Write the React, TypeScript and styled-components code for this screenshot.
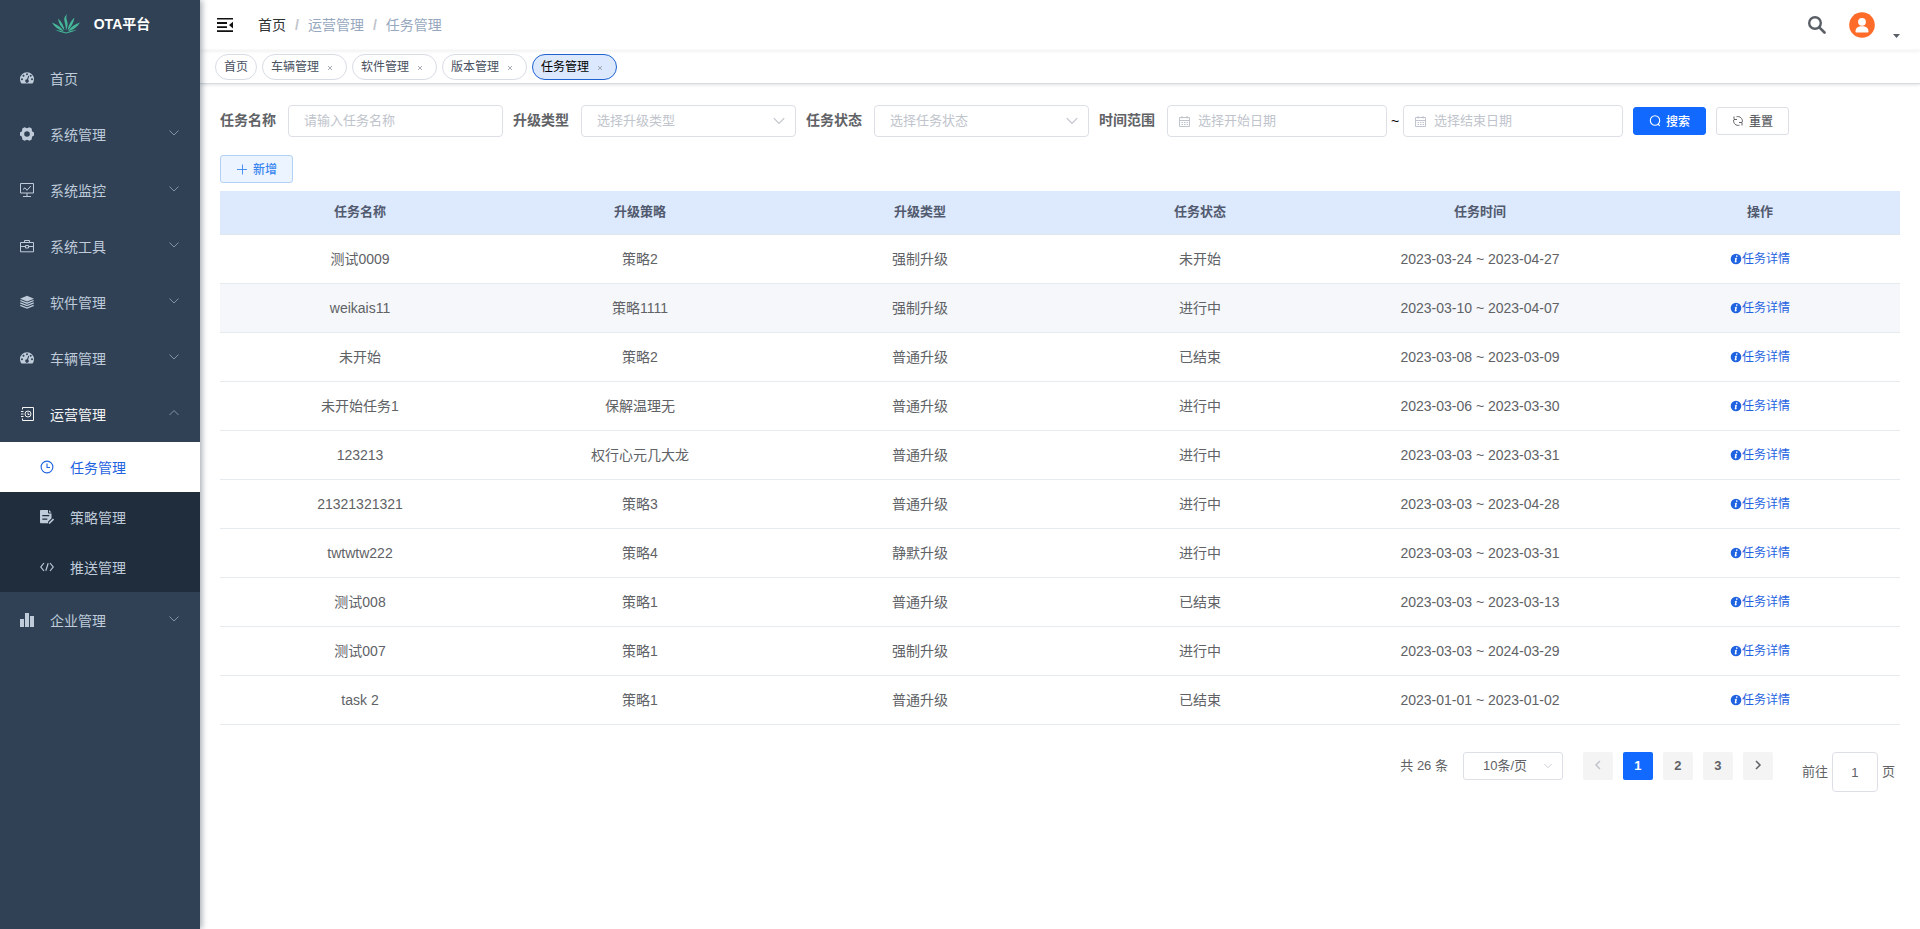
import React from "react";
import styled, { createGlobalStyle } from "styled-components";

const GlobalStyle = createGlobalStyle`
  *, *::before, *::after { box-sizing: border-box; }
  body {
    margin: 0;
    background: #fff;
    color: #606266;
    font: 14px/20px "Liberation Sans", Arial, "Noto Sans CJK SC", sans-serif;
  }
  button, input, select { font-family: inherit; margin: 0; }
  a { color: inherit; text-decoration: none; }
  svg { display: block; flex: none; }
`;

const Layout = styled.div`
  display: flex;
  min-height: 100vh;
`;

const Sidebar = styled.aside`
  flex: 0 0 200px;
  z-index: 2;
  background: #304156;
  box-shadow: 2px 0 6px rgba(0, 21, 41, 0.35);
`;

const Brand = styled.a`
  display: flex;
  align-items: center;
  justify-content: center;
  gap: 14px;
  height: 50px;
  padding: 0 0 2px 2px;
  color: #fff;
  font-size: 14px;
  font-weight: 700;
`;

const Menu = styled.ul`
  margin: 0;
  padding: 0;
  list-style: none;
`;

const SubMenu = styled(Menu)`
  background: #1f2d3d;
`;

const MenuLink = styled.a<{ $sub?: boolean; $active?: boolean; $open?: boolean }>`
  display: flex;
  align-items: center;
  height: ${(p) => (p.$sub ? 50 : 56)}px;
  padding: 0 20px 0 ${(p) => (p.$sub ? 40 : 20)}px;
  gap: 16px;
  background: ${(p) => (p.$active ? "#fff" : "transparent")};
  color: ${(p) => (p.$active ? "#1f63e0" : p.$open ? "#f4f4f5" : "#bfcbd9")};
`;

const MenuText = styled.span`
  flex: 1;
  padding-top: 2px;
`;

const Main = styled.main`
  flex: 1;
  min-width: 0;
`;

const Navbar = styled.header`
  display: flex;
  align-items: center;
  height: 50px;
  padding: 0 20px 0 17px;
  box-shadow: 0 1px 4px rgba(0, 21, 41, 0.08);
`;

const IconButton = styled.button`
  display: flex;
  padding: 0;
  border: 0;
  background: none;
  color: #5a5e66;
  cursor: pointer;
`;

const Breadcrumb = styled.nav`
  display: flex;
  flex: 1;
  margin-left: 25px;
  color: #97a8be;
`;

const Crumb = styled.a`
  &:first-child { color: #303133; }
  & + &::before {
    content: "/";
    margin: 0 9px;
    color: #c0c4cc;
    font-weight: 700;
  }
`;

const UserMenu = styled(IconButton)`
  align-items: flex-end;
  gap: 18px;
  margin-left: 23px;
`;

const Tags = styled.nav`
  display: flex;
  gap: 5px;
  height: 34px;
  padding: 4px 15px;
  border-bottom: 1px solid #d8dce5;
  box-shadow: 0 1px 3px rgba(0, 0, 0, 0.12);
`;

const Tag = styled.a<{ $active?: boolean }>`
  display: flex;
  align-items: center;
  gap: 8px;
  height: 26px;
  padding: 0 8px;
  border: 1px solid ${(p) => (p.$active ? "#1f63d0" : "#d8dce5")};
  border-radius: 13px;
  background: ${(p) => (p.$active ? "#dbe8fd" : "#fff")};
  color: ${(p) => (p.$active ? "#000" : "#495060")};
  font-size: 12px;
`;

const TagClose = styled.span`
  display: flex;
  padding: 2px 5px 0 0;
  color: #8f949e;
`;

const Content = styled.div`
  padding: 21px 20px 20px;
`;

const Filters = styled.form`
  display: flex;
  flex-wrap: wrap;
  align-items: center;
  gap: 10px;
`;

const Field = styled.div`
  display: flex;
  align-items: center;
`;

const Label = styled.label`
  margin-right: 12px;
  padding-bottom: 2px;
  font-weight: 700;
`;

const Control = styled.span<{ $width: number }>`
  position: relative;
  display: flex;
  align-items: center;
  width: ${(p) => p.$width}px;
`;

const Prefix = styled.span`
  position: absolute;
  left: 11px;
  color: #c0c4cc;
  pointer-events: none;
`;

const Suffix = styled.span`
  position: absolute;
  right: 10px;
  color: #c0c4cc;
  pointer-events: none;
`;

const TextInput = styled.input<{ $prefixed?: boolean }>`
  width: 100%;
  height: 32px;
  padding: 0 15px 2px ${(p) => (p.$prefixed ? 30 : 15)}px;
  border: 1px solid #dcdfe6;
  border-radius: 4px;
  background: #fff;
  color: #606266;
  font-size: 13px;
  &::placeholder { color: #c0c4cc; }
`;

const Select = styled.select<{ $small?: boolean }>`
  appearance: none;
  width: 100%;
  height: ${(p) => (p.$small ? 28 : 32)}px;
  padding: 0 ${(p) => (p.$small ? 19 : 30)}px 2px ${(p) => (p.$small ? 19 : 15)}px;
  border: 1px solid #dcdfe6;
  border-radius: ${(p) => (p.$small ? 3 : 4)}px;
  background: #fff;
  color: ${(p) => (p.$small ? "#606266" : "#c0c4cc")};
  font-size: 13px;
`;

const Tilde = styled.span`
  width: 16px;
  color: #000;
  text-align: center;
`;

const Button = styled.button<{ $kind: "primary" | "default" | "plain" }>`
  display: inline-flex;
  align-items: center;
  gap: 5px;
  height: 28px;
  padding: 0 15px 1px;
  border: 1px solid ${(p) => ({ primary: "#1269ff", default: "#dcdfe6", plain: "#b3d0f7" })[p.$kind]};
  border-radius: 3px;
  background: ${(p) => ({ primary: "#1269ff", default: "#fff", plain: "#ecf4ff" })[p.$kind]};
  color: ${(p) => ({ primary: "#fff", default: "#606266", plain: "#3a86ef" })[p.$kind]};
  font-size: 12px;
  font-weight: 500;
  cursor: pointer;
`;

const Toolbar = styled.div`
  display: flex;
  margin: 18px 0 8px;
`;

const Table = styled.table`
  width: 100%;
  table-layout: fixed;
  border-collapse: separate;
  border-spacing: 0;
  text-align: center;
`;

const Th = styled.th`
  height: 44px;
  padding: 0 10px 2px;
  border-bottom: 1px solid #dfe6ec;
  background: #dde9fd;
  color: #515a6e;
  font-size: 13px;
`;

const Row = styled.tr<{ $hover?: boolean }>`
  background: ${(p) => (p.$hover ? "#f5f7fa" : "#fff")};
`;

const Td = styled.td`
  height: 49px;
  padding: 0 10px;
  border-bottom: 1px solid #e6ebf0;
`;

const DetailLink = styled.a`
  display: inline-flex;
  align-items: center;
  color: #1f63e0;
  font-size: 12px;
`;

const Pagination = styled.nav`
  display: flex;
  align-items: flex-start;
  justify-content: flex-end;
  margin: 27px 5px 0 0;
  font-size: 13px;
  line-height: 28px;
`;

const Total = styled.span`
  margin-right: 15px;
`;

const Pages = styled.div`
  display: flex;
  gap: 10px;
  margin: 0 29px 0 20px;
`;

const PageButton = styled.button<{ $current?: boolean }>`
  display: flex;
  align-items: center;
  justify-content: center;
  width: 30px;
  height: 28px;
  padding: 0 0 2px;
  border: 0;
  border-radius: 2px;
  background: ${(p) => (p.$current ? "#1269ff" : "#f4f4f5")};
  color: ${(p) => (p.$current ? "#fff" : "#606266")};
  font-size: 13px;
  font-weight: 700;
  &:disabled { color: #c0c4cc; }
`;

const Jumper = styled.label`
  display: flex;
  align-items: center;
  gap: 4px;
`;

const JumpInput = styled.input`
  width: 46px;
  height: 40px;
  padding: 0;
  border: 1px solid #dcdfe6;
  border-radius: 4px;
  color: #606266;
  font-size: 13px;
  text-align: center;
`;

const chevronPaths = {
  down: "M1.5 3.5 6 8l4.5-4.5",
  up: "M1.5 8 6 3.5 10.5 8",
  left: "M8 2 4 6l4 4",
  right: "M4 2l4 4-4 4",
};

const Chevron = ({ dir = "down", size = 12, width = 1 }: { dir?: keyof typeof chevronPaths; size?: number; width?: number }) => (
  <svg width={size} height={size} viewBox="0 0 12 12" fill="none" stroke="currentColor" strokeWidth={width}>
    <path d={chevronPaths[dir]} />
  </svg>
);

const CloseIcon = () => (
  <svg width="6" height="6" viewBox="0 0 6 6" stroke="currentColor" strokeWidth="0.8">
    <path d="M1 1l4 4M5 1 1 5" />
  </svg>
);

const CalendarIcon = () => (
  <svg width="13" height="13" viewBox="0 0 13 13" fill="none" stroke="currentColor">
    <path d="M1.500 2.500h10v9h-10zM1.500 5.500h10M4 1v2.500M9 1v2.500" />
    <path d="M3.500 7.500H5M6 7.500h1.500M8.500 7.500H10M3.500 9.500H5M6 9.500h1.500M8.500 9.500H10" />
  </svg>
);

const LogoIcon = () => (
  <svg width="28" height="20" viewBox="0 0 28 20" fill="#45b798">
    <path d="M15.500 0c-3.500 2.500-3.600 5-2.800 8 .6 2.500 1 5 1.300 8.300 1.700-3.300 2.200-6.300 1-9.500C14 4.300 14 2 15.500 0z" />
    <path d="M6 4.500c.5 4.500 3 8.500 6.500 12C12 12 9.500 7.500 6 4.500z" />
    <path d="M22.500 3.500c-3.800 3.500-6.200 8-7 13 3.500-3 6-7.500 7-13z" />
    <path d="M0 8.500c2.200 4 6.500 7.500 12 9C9 13.500 5.500 10.500 0 8.500z" />
    <path d="M28 8.500c-5.500 1.500-9.500 5-12 9 5.500-1.500 9.500-5 12-9z" />
    <path d="M3 15.500c3.500 2.800 7.500 2.500 11 4 3.500-1.500 7.500-1.200 11-4-3 .8-8 1.800-11 3-3-1.200-8-2.200-11-3z" />
  </svg>
);

const FoldIcon = () => (
  <svg width="16" height="14" viewBox="0 0 16 14" fill="#111">
    <path d="M0 0h16v1.500H0zM0 4h10v2H0zM0 8.300h10v1.700H0zM0 12.300h16V14H0zM16 3.800v6.600L12 7z" />
  </svg>
);

const SearchBoldIcon = () => (
  <svg width="18" height="18" viewBox="0 0 18 18" fill="none" stroke="currentColor">
    <circle cx="7" cy="7" r="5.800" strokeWidth="2.400" />
    <path d="M11.300 11.300 16.500 16.500" strokeWidth="2.600" strokeLinecap="round" />
  </svg>
);

const AvatarIcon = () => (
  <svg width="26" height="26" viewBox="0 0 26 26">
    <circle cx="13" cy="13" r="12.800" fill="#ff6b28" />
    <circle cx="13" cy="9.800" r="3.900" fill="#fff" />
    <path d="M6.500 19.500c0-3.500 2.500-5.300 6.500-5.300s6.500 1.800 6.500 5.300c0 .7-.4 1-1 1h-11c-.6 0-1-.3-1-1z" fill="#fff" />
  </svg>
);

const CaretIcon = () => (
  <svg width="7" height="4" viewBox="0 0 7 4" fill="currentColor">
    <path d="M0 0h7L3.500 4z" />
  </svg>
);

const SearchIcon = () => (
  <svg width="12" height="12" viewBox="0 0 12 12" fill="none" stroke="currentColor" strokeWidth="1.100">
    <circle cx="6" cy="5.500" r="4.700" />
    <path d="M9 9l1.800 1.800" />
  </svg>
);

const RefreshIcon = () => (
  <svg width="12" height="12" viewBox="0 0 12 12" fill="none" stroke="currentColor">
    <path d="M4.500 1.800A4.500 4.500 0 0 1 10.300 7M7.500 10.200A4.500 4.500 0 0 1 1.700 5M2 1.500v3h3M10 10.500v-3H7" />
  </svg>
);

const PlusIcon = () => (
  <svg width="12" height="12" viewBox="0 0 12 12" stroke="currentColor">
    <path d="M1 6.500h10M6.500 1.500v10" strokeWidth="0.900" />
  </svg>
);

const InfoIcon = () => (
  <svg width="12" height="12" viewBox="0 0 12 12">
    <circle cx="6" cy="6" r="5.300" fill="#1f63e0" />
    <path d="M6.800 2.300a.8.8 0 1 1-.1 1.600.8.8 0 0 1 .1-1.600zM4.800 5l2.200-.3-.8 3.800.8-.3-.2.700-1.500.7c-.5 0-.7-.3-.6-.8L5.300 5.600 4.800 5.500z" fill="#fff" />
  </svg>
);

const menuIcons: Record<string, React.ReactNode> = {
  dashboard: (
    <path
      fill="currentColor"
      fillRule="evenodd"
      d="M7 1.200a7 7 0 0 0-7 7c0 1.400.4 2.700 1 3.800.2.300.4.500.8.500h10.400c.4 0 .6-.2.800-.5.600-1.100 1-2.400 1-3.800a7 7 0 0 0-7-7zM7 2.200a1 1 0 1 1 0 2 1 1 0 0 1 0-2zM3.500 3.700a1 1 0 1 1 0 2 1 1 0 0 1 0-2zM10.700 3.700a1 1 0 1 1 0 2 1 1 0 0 1 0-2zM2 7.200a1 1 0 1 1 0 2 1 1 0 0 1 0-2zM12 7.200a1 1 0 1 1 0 2 1 1 0 0 1 0-2zM8.300 4.700l.9.300-1.100 3.700A1.700 1.700 0 1 1 7 8.300z"
    />
  ),
  gear: (
    <path
      fill="currentColor"
      fillRule="evenodd"
      d="M4.500.3 7 1.300 9.500.3l2.200 1.300.3 2.600 2 1.300v3l-2 1.300-.3 2.600-2.200 1.300-2.500-1-2.500 1-2.200-1.300L2 9.800 0 8.500v-3l2-1.300.3-2.600zM7 4.200a2.800 2.800 0 1 0 0 5.600 2.800 2.800 0 0 0 0-5.600z"
    />
  ),
  monitor: <path fill="none" stroke="currentColor" d="M.5.500h13v9.500H.5zM7 10v3.500M3 13.500h8M3 6.500l2-1.700 2 2.500 3.800-4.300" />,
  tool: <path fill="none" stroke="currentColor" d="M.5 3.500h13v9.300H.5zM4.500 3.500v-2h5v2M.5 7.500h5M8.500 7.500h5M5.500 6.500h3v2.500h-3z" />,
  stack: (
    <g fill="none" stroke="currentColor">
      <path fill="currentColor" stroke="none" d="M7 .8l7 2.900-7 2.900-7-2.900z" />
      <path strokeWidth="1.300" d="M.3 5.500 7 8.200l6.700-2.700M.3 7.900 7 10.600l6.700-2.700M.3 10.300 7 13l6.700-2.700" />
    </g>
  ),
  log: (
    <g fill="none" stroke="currentColor">
      <path d="M2.500 2.500v-2h11v13h-11v-2M1 4.500h2.500M1 7h2.500M1 9.500h2.500" />
      <circle cx="8" cy="7" r="3" />
      <path d="M8 5.500V7.500h1.500" />
    </g>
  ),
  clock: (
    <g fill="none" stroke="currentColor" strokeWidth="1.100">
      <circle cx="7" cy="7" r="5.900" />
      <path d="M7 3.500v4h3" />
    </g>
  ),
  edit: (
    <>
      <path fill="currentColor" fillRule="evenodd" d="M1.200 0H8v2.500c0 .6.400 1 1 1h2.500v4.700L8 11.700v1.600H1.200C.4 13.300 0 12.800 0 12V1.200C0 .4.4 0 1.200 0zM2.300 5v1.200h7V5zM2.300 8.500v1.200h5V8.500z" />
      <path fill="currentColor" d="M9 0l2.500 2.500H9z" />
      <path stroke="currentColor" strokeWidth="1.600" d="M9 13.500 13.500 9" />
    </>
  ),
  code: <path fill="none" stroke="currentColor" strokeWidth="1.200" d="M4 3 .8 7 4 11M10 3l3.200 4L10 11M8.200 3.200 5.800 10.800" />,
  chart: <path fill="currentColor" d="M0 6h4v8H0zM5 0h4v14H5zM10 3h4v11h-4z" />,
};

const MenuIcon = ({ name }: { name: string }) => (
  <svg width="14" height="14" viewBox="0 0 14 14">
    {menuIcons[name]}
  </svg>
);

const MenuArrow = styled.span`
  margin: 0 0 3px;
  color: #8592a2;
`;

type Item = { text: string; icon: string; leaf?: boolean; children?: Item[] };

const menu: Item[] = [
  { text: "首页", icon: "dashboard", leaf: true },
  { text: "系统管理", icon: "gear" },
  { text: "系统监控", icon: "monitor" },
  { text: "系统工具", icon: "tool" },
  { text: "软件管理", icon: "stack" },
  { text: "车辆管理", icon: "dashboard" },
  {
    text: "运营管理",
    icon: "log",
    children: [
      { text: "任务管理", icon: "clock" },
      { text: "策略管理", icon: "edit" },
      { text: "推送管理", icon: "code" },
    ],
  },
  { text: "企业管理", icon: "chart" },
];

const tags = ["首页", "车辆管理", "软件管理", "版本管理", "任务管理"];
const columns = ["任务名称", "升级策略", "升级类型", "任务状态", "任务时间", "操作"];
const rows = [
  ["测试0009", "策略2", "强制升级", "未开始", "2023-03-24 ~ 2023-04-27"],
  ["weikais11", "策略1111", "强制升级", "进行中", "2023-03-10 ~ 2023-04-07"],
  ["未开始", "策略2", "普通升级", "已结束", "2023-03-08 ~ 2023-03-09"],
  ["未开始任务1", "保解温理无", "普通升级", "进行中", "2023-03-06 ~ 2023-03-30"],
  ["123213", "权行心元几大龙", "普通升级", "进行中", "2023-03-03 ~ 2023-03-31"],
  ["21321321321", "策略3", "普通升级", "进行中", "2023-03-03 ~ 2023-04-28"],
  ["twtwtw222", "策略4", "静默升级", "进行中", "2023-03-03 ~ 2023-03-31"],
  ["测试008", "策略1", "普通升级", "已结束", "2023-03-03 ~ 2023-03-13"],
  ["测试007", "策略1", "强制升级", "进行中", "2023-03-03 ~ 2024-03-29"],
  ["task 2", "策略1", "普通升级", "已结束", "2023-01-01 ~ 2023-01-02"],
];

const SelectField = ({ id, label, placeholder }: { id: string; label: string; placeholder: string }) => (
  <Field>
    <Label htmlFor={id}>{label}</Label>
    <Control $width={215}>
      <Select id={id}>
        <option>{placeholder}</option>
      </Select>
      <Suffix><Chevron size={14} /></Suffix>
    </Control>
  </Field>
);

export default function App() {
  return (
    <Layout>
      <GlobalStyle />
      <Sidebar>
        <Brand href="#">
          <LogoIcon />
          OTA平台
        </Brand>
        <Menu>
          {menu.map((item) => (
            <li key={item.text}>
              <MenuLink href="#" $open={!!item.children}>
                <MenuIcon name={item.icon} />
                <MenuText>{item.text}</MenuText>
                {!item.leaf && (
                  <MenuArrow>
                    <Chevron dir={item.children ? "up" : "down"} />
                  </MenuArrow>
                )}
              </MenuLink>
              {item.children && (
                <SubMenu>
                  {item.children.map((child, i) => (
                    <li key={child.text}>
                      <MenuLink href="#" $sub $active={i === 0}>
                        <MenuIcon name={child.icon} />
                        <MenuText>{child.text}</MenuText>
                      </MenuLink>
                    </li>
                  ))}
                </SubMenu>
              )}
            </li>
          ))}
        </Menu>
      </Sidebar>
      <Main>
        <Navbar>
          <IconButton aria-label="fold"><FoldIcon /></IconButton>
          <Breadcrumb>
            <Crumb href="#">首页</Crumb>
            <Crumb href="#">运营管理</Crumb>
            <Crumb href="#">任务管理</Crumb>
          </Breadcrumb>
          <IconButton aria-label="search"><SearchBoldIcon /></IconButton>
          <UserMenu aria-label="user">
            <AvatarIcon />
            <CaretIcon />
          </UserMenu>
        </Navbar>
        <Tags>
          {tags.map((tag, i) => (
            <Tag key={tag} href="#" $active={i === tags.length - 1}>
              {tag}
              {i > 0 && <TagClose><CloseIcon /></TagClose>}
            </Tag>
          ))}
        </Tags>
        <Content>
          <Filters>
            <Field>
              <Label htmlFor="name">任务名称</Label>
              <Control $width={215}>
                <TextInput id="name" placeholder="请输入任务名称" />
              </Control>
            </Field>
            <SelectField id="type" label="升级类型" placeholder="选择升级类型" />
            <SelectField id="status" label="任务状态" placeholder="选择任务状态" />
            <Field>
              <Label htmlFor="start">时间范围</Label>
              <Control $width={220}>
                <Prefix><CalendarIcon /></Prefix>
                <TextInput id="start" $prefixed placeholder="选择开始日期" />
              </Control>
              <Tilde>~</Tilde>
              <Control $width={220}>
                <Prefix><CalendarIcon /></Prefix>
                <TextInput aria-label="结束日期" $prefixed placeholder="选择结束日期" />
              </Control>
            </Field>
            <Button type="button" $kind="primary"><SearchIcon />搜索</Button>
            <Button type="button" $kind="default"><RefreshIcon />重置</Button>
          </Filters>
          <Toolbar>
            <Button type="button" $kind="plain"><PlusIcon />新增</Button>
          </Toolbar>
          <Table>
            <thead>
              <tr>{columns.map((c) => <Th key={c}>{c}</Th>)}</tr>
            </thead>
            <tbody>
              {rows.map((row, i) => (
                <Row key={row[0]} $hover={i === 1}>
                  {row.map((cell, j) => <Td key={j}>{cell}</Td>)}
                  <Td><DetailLink href="#"><InfoIcon />任务详情</DetailLink></Td>
                </Row>
              ))}
            </tbody>
          </Table>
          <Pagination>
            <Total>共 26 条</Total>
            <Control $width={100}>
              <Select $small aria-label="每页条数">
                <option>10条/页</option>
              </Select>
              <Suffix><Chevron size={10} /></Suffix>
            </Control>
            <Pages>
              <PageButton disabled aria-label="prev"><Chevron dir="left" width={1.5} /></PageButton>
              <PageButton $current>1</PageButton>
              <PageButton>2</PageButton>
              <PageButton>3</PageButton>
              <PageButton aria-label="next"><Chevron dir="right" width={1.5} /></PageButton>
            </Pages>
            <Jumper>
              前往
              <JumpInput defaultValue="1" />
              页
            </Jumper>
          </Pagination>
        </Content>
      </Main>
    </Layout>
  );
}
